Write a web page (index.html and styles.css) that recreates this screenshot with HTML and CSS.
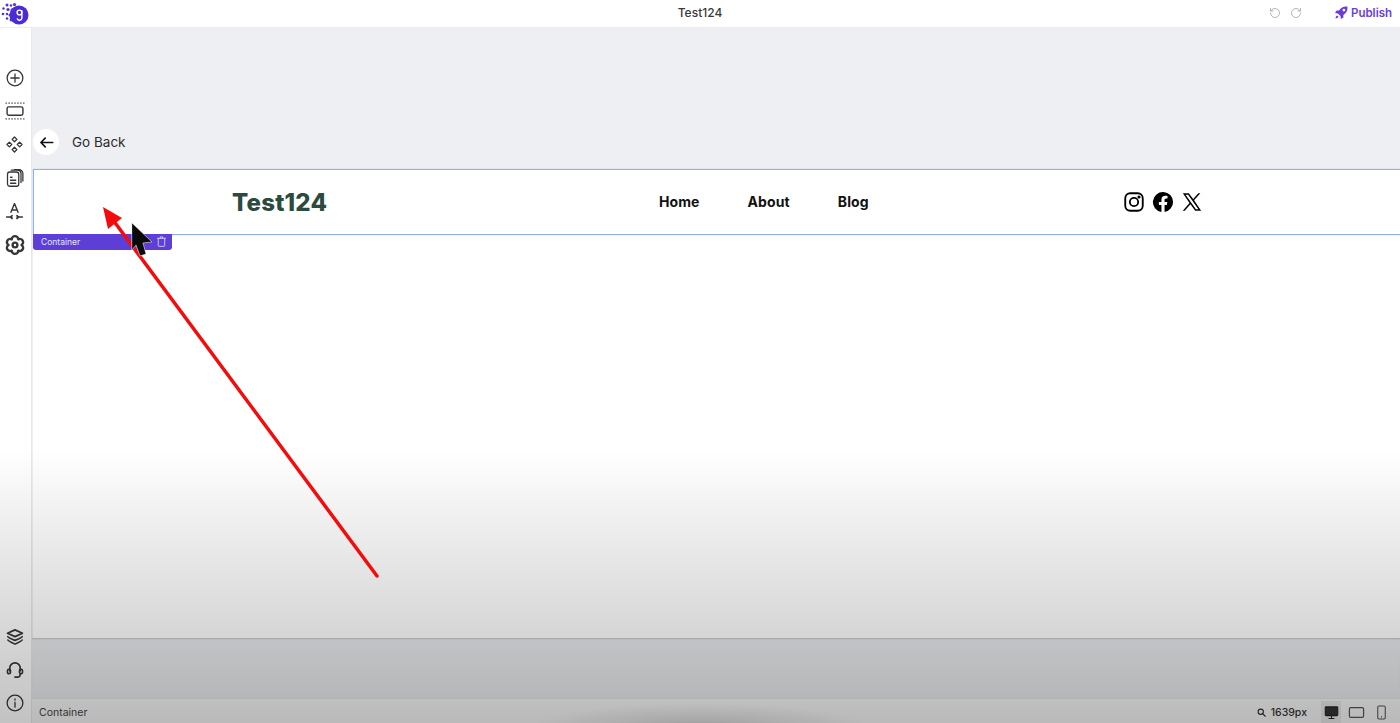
FILE: index.html
```html
<!DOCTYPE html>
<html lang="en">
<head>
<meta charset="utf-8">
<title>Test124</title>
<link rel="stylesheet" href="styles.css">
</head>
<body>
<div class="app">
  <header class="topbar">
    <svg class="logo" viewBox="0 0 30 24" width="30" height="24">
      <circle cx="19" cy="13" r="9.500" fill="#4b2bd4"/>
      <g fill="#4f33d6">
        <circle cx="7" cy="3" r="1.500"/><circle cx="11" cy="3.500" r="1.200"/><circle cx="14.500" cy="2.500" r="1.600"/>
        <circle cx="3.500" cy="6.500" r="1.200"/><circle cx="8" cy="7.500" r="1.600"/><circle cx="12" cy="8" r="1.500"/>
        <circle cx="3" cy="12" r="1.300"/><circle cx="7" cy="12" r="1.200"/><circle cx="10" cy="13" r="1.500"/>
        <circle cx="7" cy="16.500" r="1.200"/><circle cx="11" cy="18" r="1.400"/>
      </g>
      <g class="logo-g">
        <circle cx="19.500" cy="10.500" r="2.400"/>
        <path d="M21.900 9v7a2.400 2.400 0 0 1-4.600.8"/>
      </g>
    </svg>
    <span class="doc-title">Test124</span>
    <div class="top-actions">
      <svg class="hist" viewBox="0 0 24 24" width="12" height="12"><path d="M3 12a9 9 0 1 0 9-9 9.750 9.750 0 0 0-6.740 2.740L3 8M3 3v5h5"/></svg>
      <svg class="hist" viewBox="0 0 24 24" width="12" height="12"><path d="M21 12a9 9 0 1 1-9-9 9.750 9.750 0 0 1 6.740 2.740L21 8M21 3v5h-5"/></svg>
      <span class="publish">
        <svg viewBox="0 0 24 24" width="13" height="13"><path fill="#6a3dd8" d="M23 1c-7-.6-12 1.600-15.500 7.500H3L0 13l5.500 1 4.500 4.500 1 5.500 4.500-3v-4.500C21.400 13 23.600 8 23 1zM16.500 10a2.500 2.500 0 1 1 0-5 2.500 2.500 0 0 1 0 5zM4 17.500c-2 1-3 3.500-3 5.500 2 0 4.500-1 5.500-3z"/></svg>
        Publish
      </span>
    </div>
  </header>
  <div class="workspace">
    <nav class="sidebar">
      <div class="tool-group">
        <span class="tool"><svg viewBox="0 0 24 24" width="18" height="18"><circle cx="12" cy="12" r="10.500"/><path d="M12 6.500v11M6.500 12h11"/></svg></span>
        <span class="tool"><svg viewBox="0 0 24 24" width="20" height="20"><rect x="2.500" y="7" width="19" height="10" rx="2"/><path stroke-dasharray="1 2.500" stroke-width="1.200" d="M1 2.500h22M1 21.500h22"/></svg></span>
        <span class="tool"><svg viewBox="0 0 24 24" width="19" height="19"><path d="m12 2.500 3 3-3 3-3-3zM5.500 9l3 3-3 3-3-3zM18.500 9l3 3-3 3-3-3zM12 15.500l3 3-3 3-3-3z"/></svg></span>
        <span class="tool"><svg viewBox="0 0 24 24" width="18" height="18"><rect x="2" y="4" width="15" height="19" rx="3"/><path d="M7 1.500h8a5 5 0 0 1 5 4V18M11 1h6a5 5 0 0 1 5.500 5v10M6 11h2M6 15h7M6 19h7"/></svg></span>
        <span class="tool"><svg viewBox="0 0 24 24" width="19" height="19"><path d="m7.500 13 4.500-11 4.500 11M9 10h6M2 19h7M15 19h7M9 17l-2.500 2L9 21M15 17l2.500 2-2.500 2" stroke-width="1.800"/></svg></span>
        <span class="tool"><svg viewBox="0 0 24 24" width="26" height="26" class="heavy"><circle cx="12" cy="12" r="2.200"/><path d="M18 12a3 3 0 0 1-3 5.200 3 3 0 0 1-6 0A3 3 0 0 1 6 12a3 3 0 0 1 3-5.200 3 3 0 0 1 6 0A3 3 0 0 1 18 12z"/></svg></span>
      </div>
      <div class="tool-group">
        <span class="tool"><svg viewBox="0 0 24 24" width="18" height="18" class="heavy"><path d="M12 2.500 22 7l-10 4.500L2 7zM2.500 11.500c0 1 9.500 5 9.500 5s9.500-4 9.500-5M2.500 16c0 1 9.500 5.500 9.500 5.500s9.500-4.500 9.500-5.500"/></svg></span>
        <span class="tool"><svg viewBox="0 0 24 24" width="18" height="18" class="heavy"><path d="M5 13V9.500a7 7 0 0 1 14 0V13M19 17v1a3.500 3.500 0 0 1-3.500 3.500H12"/><rect x="2" y="11" width="4" height="6" rx="2"/><rect x="18" y="11" width="4" height="6" rx="2"/></svg></span>
        <span class="tool"><svg viewBox="0 0 24 24" width="18" height="18"><circle cx="12" cy="12" r="10.500"/><path d="M12 11v6.500M12 6.500v1.500"/></svg></span>
      </div>
    </nav>
    <main class="canvas">
      <div class="canvas-top">
        <div class="go-back">
          <span class="back-circle"><svg viewBox="0 0 24 24" width="15" height="15"><path d="M22 12H3M10 5l-7 7 7 7"/></svg></span>
          <span class="back-label">Go Back</span>
        </div>
      </div>
      <section class="site-page">
        <div class="site-header">
          <span class="brand">Test124</span>
          <div class="site-nav">
            <a>Home</a><a>About</a><a>Blog</a>
          </div>
          <div class="socials">
            <svg viewBox="0 0 24 24" width="20" height="20" class="s-line"><rect x="1.500" y="1.500" width="21" height="21" rx="6"/><circle cx="12" cy="12" r="5"/><circle cx="18" cy="6" r=".8" fill="#000"/></svg>
            <svg viewBox="0 0 24 24" width="22" height="22"><path fill="#000" d="M23 12a11 11 0 1 0-12.700 10.900v-7.700H7.500V12h2.800V9.600c0-2.800 1.600-4.300 4.100-4.300 1.200 0 2.500.2 2.500.2v2.700h-1.400c-1.400 0-1.800.9-1.800 1.700V12h3l-.5 3.200h-2.500v7.700A11 11 0 0 0 23 12z"/></svg>
            <svg viewBox="0 0 24 24" width="20" height="20"><path fill="#000" d="M1 1.500h7.200l5.200 7 6.200-7h2.400l-7.500 8.500L23 22.500h-7.200l-5.700-7.700-6.800 7.700H.9l8.100-9.200zm3.300 1.700 12.400 17.600h3L7.300 3.200z"/></svg>
          </div>
          <div class="sel-tag">
            <span>Container</span>
            <svg viewBox="0 0 24 24" width="11" height="11"><path d="M5 6v15a1.500 1.500 0 0 0 1.500 1.500h11A1.500 1.500 0 0 0 19 21V6M3 5h18M9 5V2h6v3"/></svg>
          </div>
        </div>
        <div class="site-body"></div>
      </section>
      <div class="shelf"></div>
      <footer class="statusbar">
        <span class="crumb">Container</span>
        <div class="status-right">
          <svg class="zoom-ico" viewBox="0 0 24 24" width="9" height="9"><circle cx="10" cy="10" r="7"/><path d="m15 15 7 7"/></svg>
          <span class="px">1639px</span>
          <span class="device active"><svg viewBox="0 0 24 24" width="15" height="15"><rect x="2" y="3" width="20" height="14" rx="1.500" fill="#333"/><path d="M12 17v4M8 21.500h8"/></svg></span>
          <span class="device"><svg viewBox="0 0 24 24" width="17" height="17"><rect x="2" y="5" width="20" height="14" rx="2"/></svg></span>
          <span class="device"><svg viewBox="0 0 24 24" width="15" height="15"><rect x="6" y="1.500" width="12" height="21" rx="2"/><path d="M12 18.500v.5"/></svg></span>
        </div>
      </footer>
    </main>
  </div>
</div>
<div class="shade"></div>
<svg class="annotation" viewBox="0 0 1400 723" width="1400" height="723">
  <path d="M377 576 113 220" stroke="#f40c0c" stroke-width="3.500" stroke-linecap="round" fill="none"/>
  <path d="M103 207l5 22 14-11z" fill="#f40c0c"/>
  <path d="M132 223l20 19-9 1 3 11-6 2-4-11-4 5z" fill="#0a0a0a" stroke="#e8e8e8" stroke-width=".6"/>
</svg>
</body>
</html>
```
FILE: styles.css
```css
* { box-sizing: border-box; }
html, body { margin: 0; height: 100%; overflow: hidden; }
body { font-family: "Inter", "Liberation Sans", sans-serif; color: #1c1c1c; background: #fff; }
svg { display: block; fill: none; stroke: currentColor; stroke-width: 1.7; stroke-linecap: round; stroke-linejoin: round; flex: none; }

.app { height: 723px; display: flex; flex-direction: column; }

.topbar { height: 28px; flex: none; display: flex; align-items: center; justify-content: space-between; padding: 0 8px 2px 0; background: #fff; border-bottom: 1px solid #eceded; position: relative; }
.logo { stroke: none; margin-top: 2px; }
.logo-g { stroke: #fff; stroke-width: 1.400; }
.doc-title { position: absolute; left: 0; right: 0; text-align: center; font-size: 12px; font-weight: 500; color: #3a3a3c; }
.top-actions { display: flex; align-items: center; position: relative; }
.hist { color: #a6a6a8; margin-right: 9px; }
.publish { display: flex; align-items: center; gap: 3px; margin-left: 24px; font-size: 11.500px; font-weight: 600; color: #6a3dd8; }
.publish svg { stroke: none; }

.workspace { flex: 1; display: flex; min-height: 0; }

.sidebar { width: 32px; flex: none; display: flex; flex-direction: column; justify-content: space-between; padding: 33px 3px 3px 0; background: #fff; border-right: 1px solid #e8e8ea; }
.tool { display: flex; height: 33.400px; width: 29px; align-items: center; justify-content: center; color: #36363a; }
.heavy { stroke-width: 2.200; }

.canvas { flex: 1; min-width: 0; display: flex; flex-direction: column; background: #eeeff3; }
.canvas-top { height: 141px; flex: none; padding: 101px 0 0 1px; }
.go-back { display: flex; align-items: center; gap: 13px; }
.back-circle { width: 26px; height: 26px; border-radius: 50%; background: #fff; display: flex; align-items: center; justify-content: center; color: #111; }
.back-circle svg { stroke-width: 2.600; }
.back-label { font-size: 13.500px; color: #2b2b2b; }

.site-page { flex: 1; display: flex; flex-direction: column; margin-left: 1px; background: #fff; }
.site-header { height: 66px; flex: none; position: relative; display: grid; grid-template-columns: 427px 465px 1fr; align-items: center; padding-left: 198px; border: 1px solid #8fb0e6; border-right: 0; box-shadow: 0 0 1px #a6c0ec; background: #fff; }
.brand { font-size: 24px; font-weight: 800; color: #2d4a3f; letter-spacing: .2px; }
.site-nav { display: flex; gap: 48px; padding-bottom: 2px; }
.site-nav a { font-size: 14px; font-weight: 700; color: #111; letter-spacing: .1px; }
.socials { display: flex; align-items: center; gap: 8px; }
.socials svg { stroke: none; }
.socials .s-line { stroke: #000; stroke-width: 2.200; }
.sel-tag { position: absolute; left: -1px; top: 100%; width: 139px; height: 16px; padding: 0 5px 1px 8px; display: flex; align-items: center; justify-content: space-between; background: #5d3fd8; border-radius: 0 0 3px 3px; color: #e9e4fb; font-size: 8.500px; }
.site-body { flex: 1; background: #fff; }

.shelf { height: 60px; flex: none; background: #e9eaed; box-shadow: inset 0 2px 2px -1px rgba(0, 0, 0, .18); }
.statusbar { height: 25px; flex: none; display: flex; align-items: center; justify-content: space-between; padding: 2px 9px 0 7px; background: #f5f5f6; border-top: 1px solid #e4e4e6; font-size: 10.500px; color: #444; }
.status-right { display: flex; align-items: center; }
.zoom-ico { margin-right: 5px; stroke-width: 3; color: #333; }
.px { font-weight: 500; margin-right: 14px; color: #333; }
.device { width: 20px; height: 22px; margin-left: 5px; display: flex; align-items: center; justify-content: center; color: #555; }
.device.active { background: #e6e6e8; color: #222; margin-left: 0; }

.shade { position: fixed; inset: 0; pointer-events: none; background:
  radial-gradient(170px 22px at 700px 726px, rgba(0, 0, 0, .14), rgba(0, 0, 0, 0)),
  linear-gradient(to bottom, rgba(0, 0, 0, 0) 450px, rgba(0, 0, 0, .165) 638px, rgba(0, 0, 0, .24) 723px); }
.annotation { position: fixed; left: 0; top: 0; pointer-events: none; stroke: none; }
```
